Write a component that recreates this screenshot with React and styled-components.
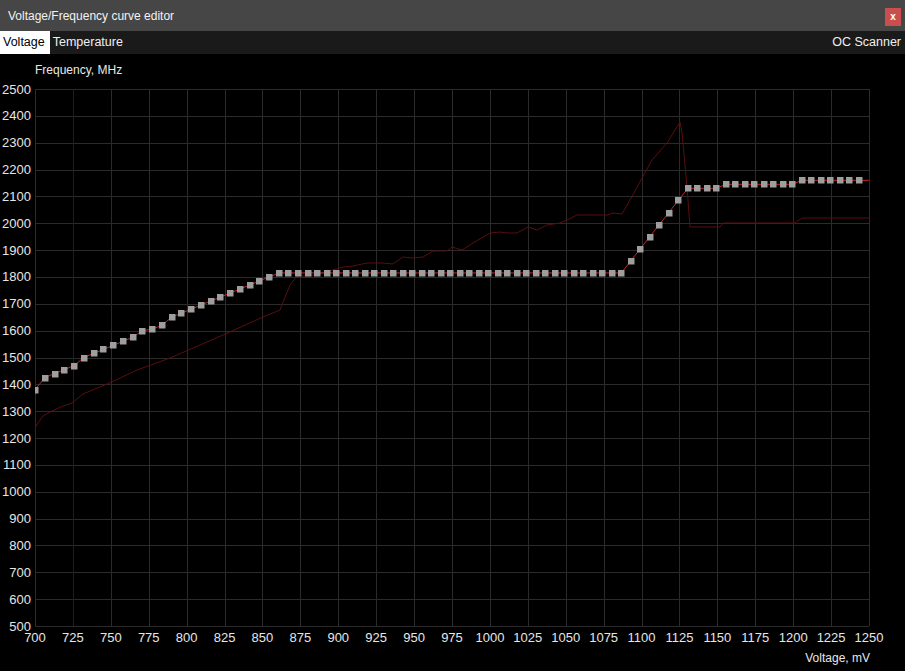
import React from "react";
import styled, { createGlobalStyle } from "styled-components";

const Global = createGlobalStyle`
  html, body { margin: 0; padding: 0; background: #000; overflow: hidden; }
  * { box-sizing: border-box; }
`;

const Window = styled.div`
  width: 905px;
  height: 671px;
  display: flex;
  flex-direction: column;
  background: #000;
  font-family: "Liberation Sans", Arial, sans-serif;
  color: #e8e8e8;
`;

const TitleBar = styled.div`
  height: 31px;
  flex: none;
  display: flex;
  align-items: center;
  justify-content: space-between;
  padding: 0 4px 0 8px;
  background: #464646;
  font-size: 12px;
  color: #f2f2f2;
`;

const CloseButton = styled.div`
  width: 16px;
  height: 18px;
  margin-top: 2px;
  background: #c94e4e;
  color: #fff;
  font-size: 10px;
  font-weight: bold;
  display: flex;
  align-items: center;
  justify-content: center;
`;

const TabBar = styled.div`
  height: 23px;
  flex: none;
  display: flex;
  align-items: stretch;
  background: #1a1a1a;
  font-size: 12.5px;
`;

const Tab = styled.div`
  padding: 0 5px 0 3px;
  line-height: 23px;
  background: ${(p) => (p.$active ? "#ffffff" : "transparent")};
  color: ${(p) => (p.$active ? "#000" : "#f0f0f0")};
  margin-left: ${(p) => (p.$right ? "auto" : "0")};
  padding-right: ${(p) => (p.$right ? "4px" : "5px")};
`;

const ChartArea = styled.div`
  flex: 1;
  display: flex;
  flex-direction: column;
`;

const YTitle = styled.div`
  height: 26px;
  padding: 9px 0 0 35px;
  line-height: 14px;
  font-size: 12px;
  color: #e8e8e8;
`;

const Plot = styled.svg`
  display: block;
  width: 905px;
  height: 568px;
  flex: none;
`;

const XTitle = styled.div`
  flex: 1;
  padding: 3px 35px 0 0;
  line-height: 14px;
  font-size: 12px;
  text-align: right;
  color: #e8e8e8;
`;

const X0 = 35, X1 = 869, Y0 = 89, Y1 = 626;
const xOf = (mv) => X0 + ((mv - 700) / 550) * (X1 - X0);
const yOf = (mhz) => Y0 + ((2500 - mhz) / 2000) * (Y1 - Y0);

const left = [1380,1425,1440,1455,1470,1500,1515,1530,1545,1560,1575,1600,1605,1620,1650,1665,1680,1695,1710,1725,1740,1755,1770,1785,1800,1815];
const freqs = [
  ...left,
  ...Array(36).fill(1815),
  1860, 1905, 1950, 1995, 2040, 2085, 2130,
  ...Array(3).fill(2130),
  ...Array(8).fill(2145),
  ...Array(7).fill(2160),
];
// voltage of each curve point: wider steps below 861 mV, finer above
const voltOf = (i) => (i <= 25 ? 700 + i * 6.436 : 860.9 + (i - 25) * 6.27);
const points = freqs.map((f, i) => [xOf(voltOf(i)), yOf(f)]);

const defaultCurve = [
  [35,430],[36,426],[43,416],[50,412],[63,406],[72,403],[83,394],[107,384],[137,370],[170,358],
  [223,335],[263,317],[280,310],[283,302],[290,285],[297,276],[310,276],[333,270],[343,267],
  [353,266],[367,263],[383,263],[393,264],[403,257],[413,258],[423,257],[433,251],[447,251],
  [452,247],[462,250],[473,243],[490,233],[500,232],[507,233],[517,233],[528,227],[537,230],
  [547,225],[560,223],[567,220],[577,215],[590,215],[607,215],[613,213],[622,214],[630,200],
  [652,160],[667,143],[680,122],[682,133],[687,187],[690,227],[720,227],[723,223],[795,223],
  [802,218],[869,218],
];

const vTicks = Array.from({ length: 23 }, (_, k) => 700 + k * 25);
const hTicks = Array.from({ length: 21 }, (_, j) => 500 + j * 100);

export default function App() {
  const curveLine = [...points, [X1, yOf(2160)]].map((p) => p.join(",")).join(" ");
  return (
    <>
      <Global />
      <Window>
        <TitleBar>
          <span>Voltage/Frequency curve editor</span>
          <CloseButton>x</CloseButton>
        </TitleBar>
        <TabBar>
          <Tab $active>Voltage</Tab>
          <Tab>Temperature</Tab>
          <Tab $right>OC Scanner</Tab>
        </TabBar>
        <ChartArea>
          <YTitle>Frequency, MHz</YTitle>
          <Plot viewBox="0 80 905 568">
            <g shapeRendering="crispEdges" strokeWidth="1">
              {hTicks.map((f) => (
                <line key={"h" + f} x1={X0} x2={X1} y1={Math.round(yOf(f)) + 0.5} y2={Math.round(yOf(f)) + 0.5} stroke="#2b2b2b" />
              ))}
              {vTicks.map((v) => (
                <line key={"v" + v} x1={Math.round(xOf(v)) + 0.5} x2={Math.round(xOf(v)) + 0.5} y1={Y0} y2={Y1} stroke={v === 725 ? "#3e1010" : "#2b2b2b"} />
              ))}
            </g>
            <polyline points={defaultCurve.map((p) => p.join(",")).join(" ")} fill="none" stroke="#5a0e0e" strokeWidth="1" />
            <polyline points={curveLine} fill="none" stroke="#c42525" strokeWidth="1" />
            <g fill="#9e9e9e">
              {points.map(([x, y], i) => (
                <rect key={i} x={Math.round(x) - 3} y={Math.round(y) - 3} width="6.5" height="6.5" />
              ))}
            </g>
            <rect x="0" y="80" width={X0} height="568" fill="#000" />
            <g fontFamily="'Liberation Sans', Arial, sans-serif" fontSize="13" fill="#e6e6e6">
              {hTicks.map((f) => (
                <text key={"yl" + f} x="31" y={yOf(f)} textAnchor="end" dominantBaseline="central">{f}</text>
              ))}
              {vTicks.map((v) => (
                <text key={"xl" + v} x={xOf(v)} y="637" textAnchor="middle" dominantBaseline="central">{v}</text>
              ))}
            </g>
          </Plot>
          <XTitle>Voltage, mV</XTitle>
        </ChartArea>
      </Window>
    </>
  );
}
